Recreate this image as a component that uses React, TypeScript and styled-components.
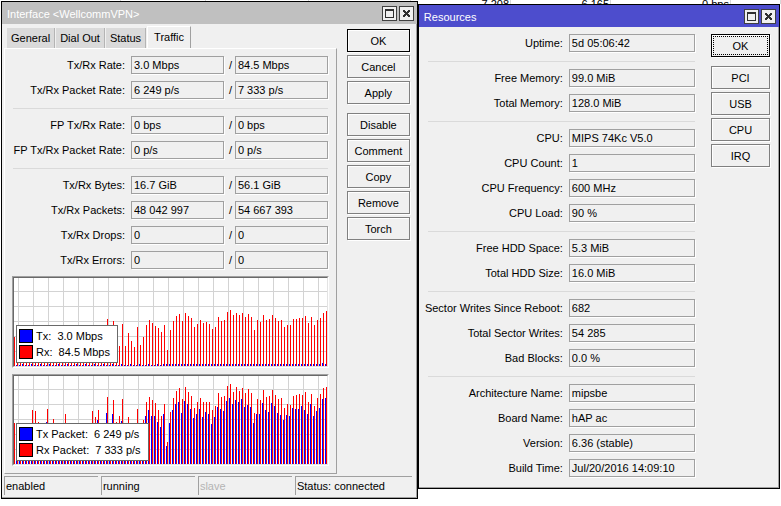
import React, { useId } from "react";
import styled, { createGlobalStyle, css } from "styled-components";

const GlobalStyle = createGlobalStyle`
  *, *::before, *::after { box-sizing: border-box; }
  body {
    margin: 0;
    background: #fff;
    color: #000;
    font: 11px/14px "Liberation Sans", Arial, sans-serif;
  }
  button, input { font: inherit; color: inherit; }
`;

const Desktop = styled.main`
  position: relative;
  display: flex;
  align-items: flex-start;
  padding: 1px;
`;

const BackgroundList = styled.div`
  position: absolute;
  inset: 0 0 auto 0;
  height: 4px;
  overflow: hidden;
  display: grid;
  grid-template-columns: 121fr 85fr 103fr 102fr 100fr 100fr 120fr 50fr;
  align-items: end;
  line-height: 8px;
  text-align: right;
  span {
    min-height: 8px;
    padding-right: 1px;
    border-right: 1px solid #d8d8d8;
  }
`;

const Window = styled.section<{ $grow: number; $drop?: boolean }>`
  position: relative;
  flex: ${(p) => p.$grow} 1 0;
  min-width: 0;
  margin-top: ${(p) => (p.$drop ? 3 : 0)}px;
  border: 1px solid #000;
  background: #f0f0f0;
  box-shadow: inset -1px -1px 0 #a0a0a0;
`;

const TitleBar = styled.header<{ $active?: boolean }>`
  display: flex;
  align-items: center;
  gap: 2px;
  height: 22px;
  padding: 0 3px 0 5px;
  background: ${(p) => (p.$active ? "#4d4dcd" : "#c0c0c0")};
  color: #fff;
`;

const Title = styled.h1`
  flex: 1;
  margin: 0;
  font-size: 11px;
  font-weight: 400;
  line-height: 14px;
  padding-top: 2px;
`;

const CaptionButton = styled.button`
  display: flex;
  width: 15px;
  height: 15px;
  padding: 0;
  border: 1px solid #404040;
  background: #f0f0f0;
  svg { display: block; }
`;

const Body = styled.div<{ $resources?: boolean }>`
  display: flex;
  align-items: flex-start;
  ${(p) =>
    p.$resources
      ? css`gap: 16px; padding: 7px 9px 11px;`
      : css`gap: 10px; padding: 2px 7px 2px 2px;`}
`;

const Main = styled.div`
  flex: 1;
  min-width: 0;
`;

const Tabs = styled.div`
  display: flex;
  align-items: flex-end;
  height: 22px;
  padding-left: 3px;
`;

const Tab = styled.button<{ $on?: boolean }>`
  flex: none;
  height: ${(p) => (p.$on ? 22 : 20)}px;
  margin-right: ${(p) => (p.$on ? 0 : 1)}px;
  padding: ${(p) => (p.$on ? "0 6px 1px" : "0 4px")};
  border: 0 solid;
  border-width: ${(p) => (p.$on ? "1px 1px 0 1px" : "0 1px 0 0")};
  border-color: ${(p) => (p.$on ? "#fff #a0a0a0 #fff #fff" : "#b4b4b4")};
  background: ${(p) => (p.$on ? "#f0f0f0" : "#dadada")};
`;

const Panel = styled.div`
  padding: 7px 8px;
  border: 1px solid;
  border-color: #fff #a0a0a0 #a0a0a0 #fff;
`;

const Group = styled.div`
  display: grid;
  grid-template-columns: minmax(0, 1fr);
  gap: 7px;
  & + & {
    margin-top: 9px;
    padding-top: 7px;
    border-top: 1px solid #dadada;
  }
`;

const Row = styled.div<{ $label: number }>`
  display: flex;
  align-items: center;
  height: 18px;
  label {
    flex: none;
    display: flex;
    justify-content: flex-end;
    width: ${(p) => p.$label}px;
    margin-right: 6px;
    white-space: nowrap;
  }
`;

const Slash = styled.span`
  flex: none;
  width: 11px;
  padding-left: 5px;
`;

const Value = styled.input`
  flex: 1;
  width: 0;
  min-width: 0;
  height: 18px;
  padding: 0 2px;
  border: 1px solid #a0a0a0;
  border-radius: 0;
  outline: 0;
  background: #f0f0f0;
  box-shadow: 1px 1px 0 #fff;
`;

const Actions = styled.div<{ $width: number; $top: number }>`
  flex: none;
  display: grid;
  gap: 9px;
  width: ${(p) => p.$width}px;
  padding-top: ${(p) => p.$top}px;
`;

const ActionGroup = styled.div`
  display: grid;
  gap: 3px;
`;

const Action = styled.button<{ $primary?: boolean; $focus?: boolean }>`
  height: 23px;
  padding: 0;
  border: 1px solid ${(p) => (p.$primary ? "#000" : "#808080")};
  background: #f0f0f0;
  box-shadow: inset 1px 1px 0 #fff, 1px 1px 0 #fff;
  ${(p) => p.$focus && css`outline: 1px dotted #000; outline-offset: -3px;`}
`;

const ChartFrame = styled.figure`
  position: relative;
  margin: 7px -1px 0;
  border: 1px solid;
  border-color: #a0a0a0 #fff #fff #a0a0a0;
  & + & { margin-top: 6px; }
`;

const Plot = styled.svg`
  display: block;
  width: 100%;
  height: 90px;
  border: 1px solid;
  border-color: #696969 #e3e3e3 #e3e3e3 #696969;
  background: #fff;
`;

const Legend = styled.figcaption`
  position: absolute;
  left: 3px;
  bottom: 4px;
  display: grid;
  gap: 2px;
  padding: 3px 7px 3px 2px;
  border: 1px solid #696969;
  background: #fff;
`;

const LegendItem = styled.div`
  display: flex;
  align-items: center;
  gap: 3px;
  white-space: pre;
`;

const Swatch = styled.i<{ $color: string }>`
  width: 14px;
  height: 14px;
  border: 1px solid #000;
  background: ${(p) => p.$color};
`;

const StatusBar = styled.footer`
  display: grid;
  grid-template-columns: 94fr 94fr 94fr 117fr;
  gap: 3px;
  padding: 0 5px 3px 2px;
`;

const StatusCell = styled.span<{ $dim?: boolean }>`
  height: 19px;
  padding: 2px 0 0 1px;
  border: solid #a0a0a0;
  border-width: 1px 0 0 1px;
  color: ${(p) => (p.$dim ? "#b4b4b4" : "#000")};
  white-space: nowrap;
`;

const repeat = (n: number, value: number) => Array<number>(n).fill(value);

const rateRx = [
  29, ...repeat(30, 20), 47, 20, 45, 20, 20, 42, 20, 33, 25, 19, 39, 21, 29, 41, 46, 43, 40, 38,
  34, 41, 16, 36, 45, 50, 52, 45, 53, 50, 48, 39, 42, 46, 43, 44, 42, 37, 39, 49, 45, 46, 54, 56,
  51, 53, 51, 53, 49, 52, 49, 36, 46, 44, 51, 46, 47, 51, 48, 45, 46, 39, 41, 41, 47, 47, 48, 48,
  50, 43, 49, 41, 46, 48, 53, 55,
];
const rateTx = rateRx.map((_, i) => (i === 103 ? 3 : i < 50 && i % 3 !== 0 ? 1 : 2));

const packetRx = [
  41, 20, 20, 20, 20, 20, 54, 53, 42, 20, 20, 55, 20, 45, 20, 20, 20, 50, ...repeat(8, 20), 53, 47,
  54, 20, 20, 67, 20, 64, 42, 48, 65, 20, 47, 20, 20, 55, 20, 44, 62, 67, 64, 61, 54, 48, 60, 22,
  52, 66, 73, 76, 65, 77, 72, 68, 56, 62, 66, 62, 62, 62, 54, 58, 71, 67, 68, 78, 80, 72, 77, 73,
  76, 71, 75, 71, 51, 65, 64, 74, 67, 68, 74, 69, 65, 66, 56, 60, 59, 68, 69, 70, 69, 72, 62, 70,
  58, 66, 70, 76, 77,
];
const packetTx = [
  ...repeat(11, 18), 42, ...repeat(16, 18), 44, 18, 18, 51, 18, 50, 18, 18, 43, ...repeat(4, 30),
  37, 30, 37, 48, 54, 48, 48, 42, 37, 50, 18, 41, 54, 60, 62, 51, 63, 60, 55, 46, 50, 55, 47, 52,
  50, 40, 47, 57, 55, 53, 63, 66, 60, 64, 62, 65, 57, 59, 57, 41, 50, 50, 61, 54, 52, 61, 58, 51,
  49, 44, 49, 48, 56, 55, 55, 58, 54, 50, 60, 48, 53, 56, 65, 66,
];

const H = 88;
const barPath = (heights: number[], offset: number) =>
  heights
    .map((h, i) => [i * 3 + offset, h])
    .filter(([x]) => x >= 0)
    .map(([x, h]) => `M${x} ${H - h}h1v${h}h-1z`)
    .join("");

const gridPath =
  Array.from({ length: 21 }, (_, i) => `M${4 + i * 15} 0h1v${H}h-1z`).join("") +
  Array.from({ length: 5 }, (_, i) => `M0 ${13 + i * 15}h314v1h-314z`).join("");

function Chart(props: { name: string; tx: number[]; rx: number[]; txText: string; rxText: string }) {
  return (
    <ChartFrame>
      <Plot viewBox={`0 0 313 ${H}`} preserveAspectRatio="none" shapeRendering="crispEdges" role="img" aria-label={props.name}>
        <path d={gridPath} fill="#d3d3d3" />
        <path d={barPath(props.tx, -1)} fill="#00f" />
        <path d={barPath(props.rx, 0)} fill="#f00" />
      </Plot>
      <Legend>
        <LegendItem><Swatch $color="#00f" />{props.txText}</LegendItem>
        <LegendItem><Swatch $color="#f00" />{props.rxText}</LegendItem>
      </Legend>
    </ChartFrame>
  );
}

function Field({ label, values, width }: { label: string; values: string[]; width: number }) {
  const id = useId();
  return (
    <Row $label={width}>
      <label htmlFor={id}>{label}:</label>
      <Value id={id} readOnly value={values[0]} />
      {values.length > 1 && (
        <>
          <Slash>/</Slash>
          <Value aria-label={`${label} (Rx)`} readOnly value={values[1]} />
        </>
      )}
    </Row>
  );
}

function Caption({ title, active }: { title: string; active?: boolean }) {
  return (
    <TitleBar $active={active}>
      <Title>{title}</Title>
      <CaptionButton aria-label="Maximize">
        <svg width="13" height="13" shapeRendering="crispEdges">
          <path d="M2 2h9v9h-9z M3 4v6h7v-6z" fill="#303030" fillRule="evenodd" />
        </svg>
      </CaptionButton>
      <CaptionButton aria-label="Close">
        <svg width="13" height="13" shapeRendering="crispEdges">
          <path
            d="M3 3h2v1h1v1h1v-1h1v-1h2v2h-1v1h-1v1h1v1h1v2h-2v-1h-1v-1h-1v1h-1v1h-2v-2h1v-1h1v-1h-1v-1h-1z"
            fill="#303030"
          />
        </svg>
      </CaptionButton>
    </TitleBar>
  );
}

type Entry = [string, ...string[]];

const trafficGroups: Entry[][] = [
  [["Tx/Rx Rate", "3.0 Mbps", "84.5 Mbps"], ["Tx/Rx Packet Rate", "6 249 p/s", "7 333 p/s"]],
  [["FP Tx/Rx Rate", "0 bps", "0 bps"], ["FP Tx/Rx Packet Rate", "0 p/s", "0 p/s"]],
  [
    ["Tx/Rx Bytes", "16.7 GiB", "56.1 GiB"],
    ["Tx/Rx Packets", "48 042 997", "54 667 393"],
    ["Tx/Rx Drops", "0", "0"],
    ["Tx/Rx Errors", "0", "0"],
  ],
];

const resourceGroups: Entry[][] = [
  [["Uptime", "5d 05:06:42"]],
  [["Free Memory", "99.0 MiB"], ["Total Memory", "128.0 MiB"]],
  [["CPU", "MIPS 74Kc V5.0"], ["CPU Count", "1"], ["CPU Frequency", "600 MHz"], ["CPU Load", "90 %"]],
  [["Free HDD Space", "5.3 MiB"], ["Total HDD Size", "16.0 MiB"]],
  [["Sector Writes Since Reboot", "682"], ["Total Sector Writes", "54 285"], ["Bad Blocks", "0.0 %"]],
  [
    ["Architecture Name", "mipsbe"],
    ["Board Name", "hAP ac"],
    ["Version", "6.36 (stable)"],
    ["Build Time", "Jul/20/2016 14:09:10"],
  ],
];

function Fields({ groups, width }: { groups: Entry[][]; width: number }) {
  return (
    <>
      {groups.map((group, i) => (
        <Group key={i}>
          {group.map(([label, ...values]) => (
            <Field key={label} label={label} values={values} width={width} />
          ))}
        </Group>
      ))}
    </>
  );
}

function ActionList(props: { groups: string[][]; width: number; top: number; focus?: boolean }) {
  return (
    <Actions $width={props.width} $top={props.top}>
      {props.groups.map((group) => (
        <ActionGroup key={group[0]}>
          {group.map((name) => (
            <Action key={name} $primary={name === "OK"} $focus={name === "OK" && props.focus}>
              {name}
            </Action>
          ))}
        </ActionGroup>
      ))}
    </Actions>
  );
}

export default function App() {
  return (
    <>
      <GlobalStyle />
      <Desktop>
        <BackgroundList aria-hidden="true">
          {["", "", "", "", "7 208", "6 165", "0 bps", ""].map((text, i) => (
            <span key={i}>{text}</span>
          ))}
        </BackgroundList>
        <Window $grow={417} aria-label="Interface <WellcommVPN>">
          <Caption title="Interface <WellcommVPN>" />
          <Body>
            <Main>
              <Tabs role="tablist">
                {["General", "Dial Out", "Status", "Traffic"].map((name) => (
                  <Tab key={name} role="tab" aria-selected={name === "Traffic"} $on={name === "Traffic"}>
                    {name}
                  </Tab>
                ))}
              </Tabs>
              <Panel role="tabpanel">
                <Fields groups={trafficGroups} width={112} />
                <Chart name="Rate" tx={rateTx} rx={rateRx} txText="Tx:  3.0 Mbps" rxText="Rx:  84.5 Mbps" />
                <Chart
                  name="Packet rate"
                  tx={packetTx}
                  rx={packetRx}
                  txText="Tx Packet:  6 249 p/s"
                  rxText="Rx Packet:  7 333 p/s"
                />
              </Panel>
            </Main>
            <ActionList
              width={63}
              top={3}
              groups={[["OK", "Cancel", "Apply"], ["Disable", "Comment", "Copy", "Remove", "Torch"]]}
            />
          </Body>
          <StatusBar>
            <StatusCell>enabled</StatusCell>
            <StatusCell>running</StatusCell>
            <StatusCell $dim>slave</StatusCell>
            <StatusCell>Status: connected</StatusCell>
          </StatusBar>
        </Window>
        <Window $grow={362} $drop aria-label="Resources">
          <Caption title="Resources" active />
          <Body $resources>
            <Main>
              <Fields groups={resourceGroups} width={135} />
            </Main>
            <ActionList width={59} top={0} focus groups={[["OK"], ["PCI", "USB", "CPU", "IRQ"]]} />
          </Body>
        </Window>
      </Desktop>
    </>
  );
}
